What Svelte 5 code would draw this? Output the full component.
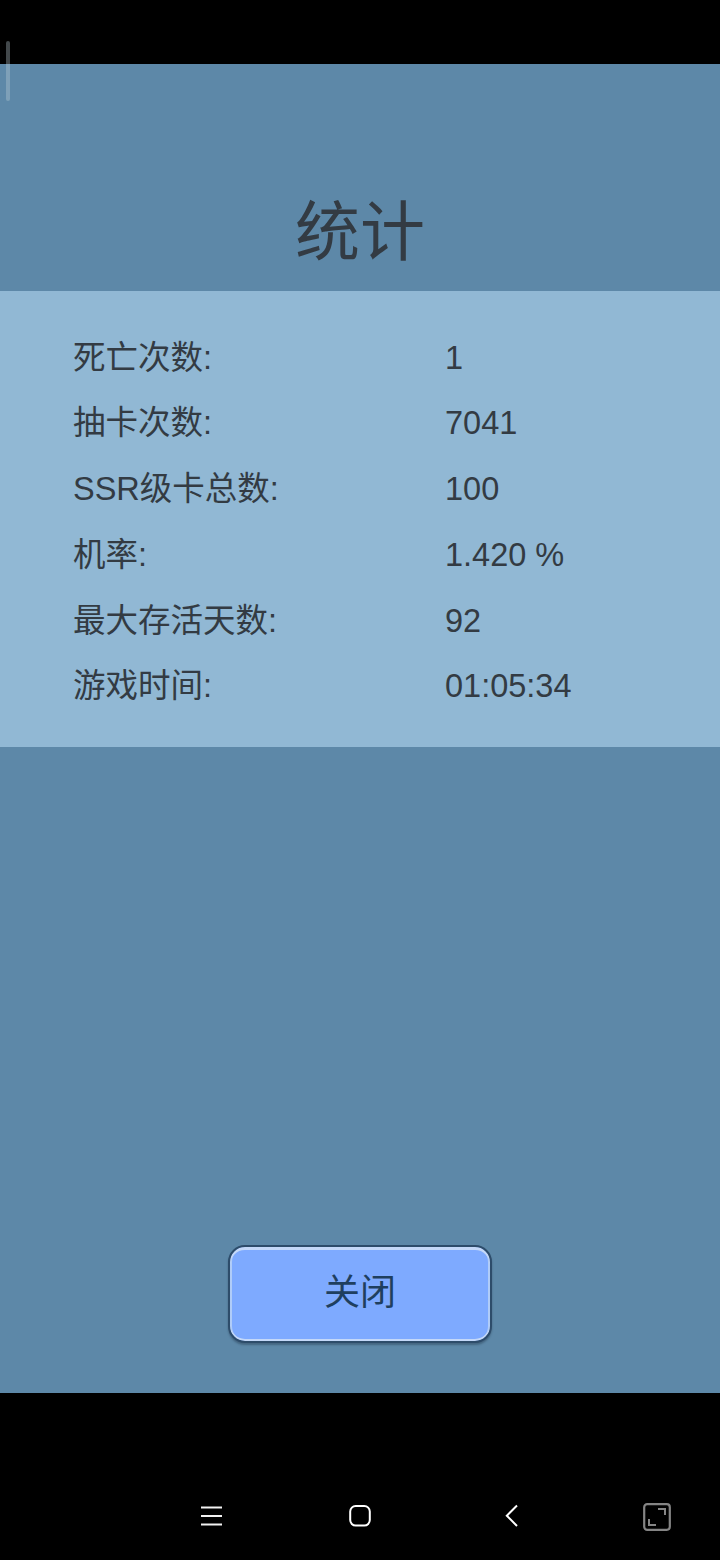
<script>
  const stats = [
    { label: '死亡次数:', value: '1' },
    { label: '抽卡次数:', value: '7041' },
    { label: 'SSR级卡总数:', value: '100' },
    { label: '机率:', value: '1.420 %' },
    { label: '最大存活天数:', value: '92' },
    { label: '游戏时间:', value: '01:05:34' }
  ];
</script>

<div class="screen">
  <div class="status"></div>
  <div class="scroll-mark"></div>

  <main class="game">
    <h1>统计</h1>

    <section class="panel">
      {#each stats as row}
        <div class="row">
          <span class="label">{row.label}</span>
          <span class="value">{row.value}</span>
        </div>
      {/each}
    </section>

    <button class="close">关闭</button>
  </main>

  <nav class="navbar">
    <svg class="icon" viewBox="0 0 24 24" width="24" height="24">
      <path d="M2 4.5h21M2 13h21M2 21.5h21" fill="none" stroke="#f2f2f2" stroke-width="1.8" />
    </svg>
    <svg class="icon" viewBox="0 0 24 24" width="24" height="24">
      <rect x="2.2" y="3" width="19.6" height="19.6" rx="5.5" fill="none" stroke="#fff" stroke-width="2" />
    </svg>
    <svg class="icon" viewBox="0 0 24 24" width="24" height="24">
      <path d="M17 2.5 6.8 12.7 17 23" fill="none" stroke="#fff" stroke-width="2" />
    </svg>
    <svg class="icon" viewBox="0 0 28 28" width="28" height="28">
      <rect x="1.2" y="1.2" width="25.6" height="25.6" rx="3" fill="none" stroke="#858585" stroke-width="2.2" />
      <path d="M15 6h7v6M6 16v6h7" fill="none" stroke="#858585" stroke-width="2" />
    </svg>
  </nav>
</div>

<style>
  :global(body) {
    margin: 0;
    background: #000;
    font-family: "Liberation Sans", "Noto Sans CJK SC", sans-serif;
  }

  .screen {
    position: relative;
    display: flex;
    flex-direction: column;
    width: 720px;
    height: 1560px;
    overflow: hidden;
    background: #000;
  }

  .status {
    height: 64px;
    flex: none;
  }

  .scroll-mark {
    position: absolute;
    left: 6px;
    top: 41px;
    width: 4px;
    height: 60px;
    border-radius: 2px;
    background: rgba(190, 205, 215, 0.35);
  }

  .game {
    display: flex;
    flex-direction: column;
    align-items: center;
    height: 1329px;
    flex: none;
    background: #5d88a8;
  }

  h1 {
    margin: 0;
    width: 100%;
    height: 227px;
    flex: none;
    box-sizing: border-box;
    padding-top: 129px;
    text-align: center;
    font-size: 65px;
    line-height: 80px;
    font-weight: 400;
    color: #333b43;
  }

  .panel {
    width: 100%;
    height: 456px;
    flex: none;
    box-sizing: border-box;
    padding: 33.5px 0 0 73px;
    background: #91b8d4;
  }

  .row {
    display: flex;
    height: 65.8px;
    font-size: 32.5px;
    line-height: 66px;
    color: #333b43;
  }

  .label {
    width: 372px;
    flex: none;
  }

  .close {
    margin-top: auto;
    margin-bottom: 50px;
    width: 264px;
    height: 98px;
    padding: 0 0 11px;
    box-sizing: border-box;
    border: 2.5px solid #2d4c6a;
    border-radius: 17px;
    background: #7eaaff;
    box-shadow: inset 0 3px 0 #c4d8f8, inset 0 -2px 0 #c4d8f8, inset 2px 0 0 #b0ccf8, inset -2px 0 0 #b0ccf8, 0 2px 2px rgba(30, 50, 70, 0.4);
    font-family: inherit;
    font-size: 36px;
    color: #1f3f5f;
  }

  .navbar {
    position: relative;
    flex: 1;
  }

  .icon {
    position: absolute;
    top: 110px;
  }

  .icon:nth-child(1) { left: 199px; }
  .icon:nth-child(2) { left: 348px; }
  .icon:nth-child(3) { left: 500px; }
  .icon:nth-child(4) { left: 643px; }
</style>
